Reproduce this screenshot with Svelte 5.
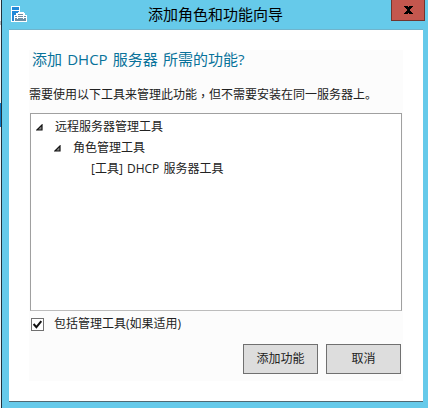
<script>
  let included = $state(true);
</script>

<div class="screen">
  <div class="backdrop"><i class="grey"></i><i class="blue"></i></div>
  <div class="window">
    <header>
      <svg class="app-icon" width="17" height="17" viewBox="0 0 17 17" shape-rendering="crispEdges">
        <path fill="#fff" d="M0 0h9v16H0z" />
        <path fill="#2389d7" d="M1 1h7v3H1zM1 5h7v10H1z" />
        <path fill="#fff" d="M3 9h2V7h2V6h6v1h1v2h2v7H3z" />
        <path fill="#6d8ea4" d="M4 10h11v1H4zM4 12h11v3H4zM7 8h5v1H7z" />
        <path fill="#fff" d="M6 10h1v3H6zM12 10h1v3h-1z" />
      </svg>
      <h1>添加角色和功能向导</h1>
      <button class="close" aria-label="关闭">
        <svg width="9" height="8" viewBox="0 0 9 8" shape-rendering="crispEdges">
          <path d="M0 0h4v1h1V0h4v1H8v1H7v1H6v2h1v1h1v1h1v1H5V7H4v1H0V7h1V6h1V5h1V3H2V2H1V1H0z" />
        </svg>
      </button>
    </header>
    <main>
      <section>
        <h2>添加 DHCP 服务器 所需的功能?</h2>
        <p>需要使用以下工具来管理此功能<span class="comma">，</span>但不需要安装在同一服务器上。</p>
        <div class="tree">
          <div class="row root"><svg width="7" height="7" viewBox="0 0 7 7"><path d="M6 .9V6H.9z" /></svg>远程服务器管理工具</div>
          <div class="row child"><svg width="7" height="7" viewBox="0 0 7 7"><path d="M6 .9V6H.9z" /></svg>角色管理工具</div>
          <div class="row leaf">[工具] DHCP 服务器工具</div>
        </div>
        <label>
          <input type="checkbox" bind:checked={included} />
          <span class="box">
            {#if included}
              <svg width="11" height="11" viewBox="0 0 11 11"><path d="M1.6 5L4.4 8.2 9.3 2.2" /></svg>
            {/if}
          </span>
          包括管理工具(如果适用)
        </label>
        <div class="actions">
          <button>添加功能</button>
          <button>取消</button>
        </div>
      </section>
    </main>
  </div>
</div>

<style>
  :global(body) { margin: 0; }
  * { box-sizing: border-box; }
  .screen {
    display: flex;
    width: 428px;
    height: 408px;
    overflow: hidden;
    font: 12px/16px "Open Sans", "Noto Sans CJK SC", sans-serif;
    color: #222;
  }
  .backdrop {
    width: 2px;
    height: 408px;
    border-right: 1px solid #20323d;
    background: #f2f5f7;
    padding-top: 21px;
  }
  .backdrop i { display: block; width: 1px; }
  .grey { height: 4px; background: #b8bdc1; }
  .blue { height: 24px; margin-top: 78px; background: #0878c8; }
  .window {
    width: 426px;
    padding: 0 5px 6px 7px;
    background: #66caea;
  }
  header {
    display: flex;
    justify-content: space-between;
    height: 29px;
    margin-right: -2px;
    align-items: flex-start;
  }
  .app-icon { margin: 6px 0 0 2px; }
  h1 {
    margin: 4px 0 0 12px;
    font-size: 15px;
    line-height: 20px;
    font-weight: 400;
    color: #000;
  }
  button { font: inherit; padding: 0; border-radius: 0; }
  .close {
    display: flex;
    align-items: center;
    justify-content: flex-start;
    flex: none;
    width: 34px;
    height: 21px;
    padding-left: 12px;
    border: 1px solid #71352f;
    border-top: 0;
    background: #c4574e;
  }
  main {
    height: 373px;
    border-top: 1px solid #70b4cc;
    border-bottom: 1px solid #506872;
    background: #fff;
    padding: 20px 20px 0;
  }
  section {
    height: 331px;
    background: #fcfcfc;
  }
  h2 {
    margin: 0;
    padding: 0 0 0 3px;
    font-size: 15px;
    line-height: 18px;
    font-weight: 400;
    color: #08729a;
    word-spacing: 1.3px;
    white-space: nowrap;
  }
  p {
    margin: 19px 0 10px;
    height: 16px;
    white-space: nowrap;
  }
  .comma {
    position: relative;
    top: 2px;
    font-family: "Noto Sans CJK TC", sans-serif;
    line-height: 1;
  }
  .tree {
    width: 372px;
    height: 198px;
    margin-left: 1px;
    border: 1px solid #a0a0a0;
    border-bottom-color: #bcbcbc;
    background: #fff;
    padding-top: 2px;
  }
  .row {
    display: flex;
    align-items: center;
    height: 21px;
    white-space: pre;
  }
  .row svg { margin: 2px 12px 0 0; fill: #888; stroke: #111; stroke-width: 1.2; }
  .root { padding-left: 5px; }
  .child { padding-left: 23px; }
  .leaf { padding-left: 60px; word-spacing: 1px; }
  label {
    display: flex;
    align-items: center;
    height: 21px;
    margin: 2px 0 0 2px;
  }
  input { position: absolute; opacity: 0; }
  .box {
    width: 13px;
    height: 13px;
    margin: 1px 10px 0 0;
    border: 1px solid #707070;
    background: #fff;
  }
  .box svg { display: block; fill: none; stroke: #111; stroke-width: 2; }
  .actions {
    display: flex;
    justify-content: flex-end;
    gap: 8px;
    padding: 10px 2px 0 0;
  }
  .actions button {
    width: 75px;
    height: 30px;
    border: 1px solid #707070;
    background: #ddd;
    color: #222;
  }
</style>
